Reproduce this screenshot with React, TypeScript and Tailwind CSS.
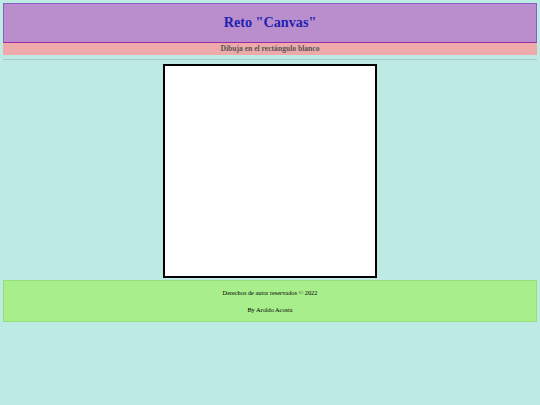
export default function App() {
  return (
    <div className="min-h-[405px] w-[540px] bg-[#bdeae3] p-[3px] font-['Liberation_Serif',serif]">
      <header className="flex h-[40px] items-center justify-center border border-[#8a5cc6] border-b-[#9a2aa6] bg-[#ba8ecd]">
        <h1 className="text-[14.2px] font-bold text-[#2323b0]">Reto "Canvas"</h1>
      </header>
      <div className="flex h-[12px] items-center justify-center bg-[#eeaaaa]">
        <p className="text-[7.6px] font-bold text-[#555555]">Dibuja en el rectángulo blanco</p>
      </div>
      <hr className="mt-[4px] border-t border-[#a9c9c4]" />
      <div className="flex justify-center pt-[4px]">
        <div className="h-[214px] w-[214px] border-2 border-black bg-white" />
      </div>
      <footer className="mt-[2px] flex h-[42px] flex-col items-center justify-center gap-[7px] border border-[#94e07e] bg-[#a8ef8c] text-[6.3px] text-black">
        <p>Derechos de autor reservados © 2022</p>
        <p>By Aroldo Acosta</p>
      </footer>
    </div>
  );
}
